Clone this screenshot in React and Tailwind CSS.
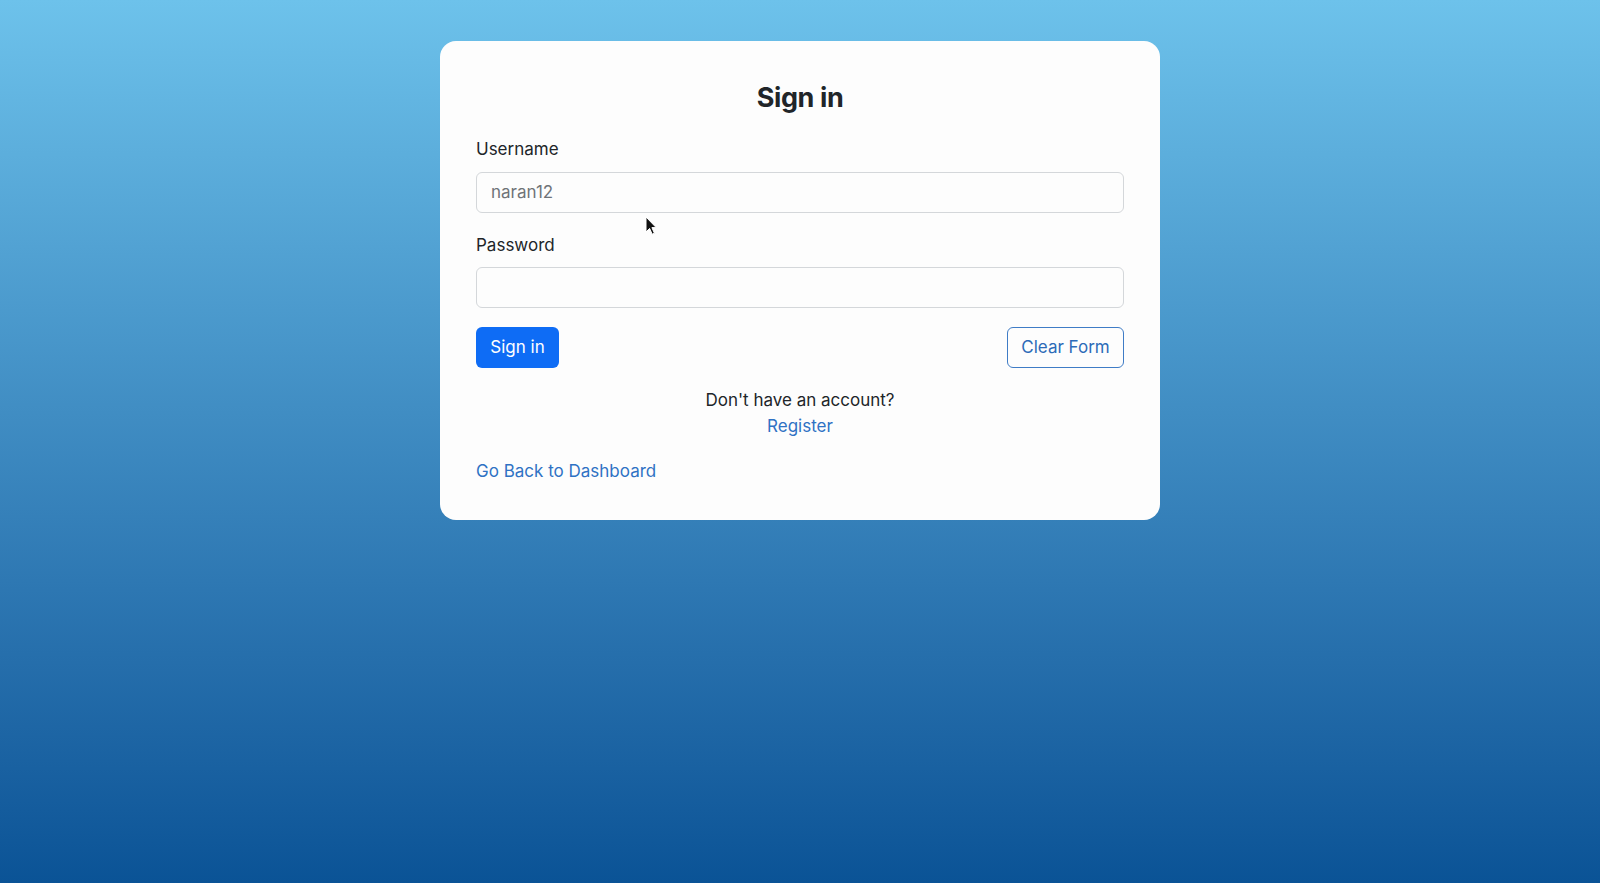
import React from "react";

export default function App() {
  return (
    <div
      className="relative w-full h-[883px] overflow-hidden bg-linear-to-b from-[#6dc2eb] to-[#0a5396]"
      style={{ fontFamily: "Inter, 'Noto Sans', 'Liberation Sans', sans-serif" }}
    >
      <div className="mx-auto mt-[41px] w-[720px] rounded-2xl bg-[#fdfdfd] px-9 pt-[41px] pb-[36px] text-[#212529]">
        <h1 className="text-center text-[27px] font-bold leading-[32px] tracking-[-0.4px]">Sign in</h1>

        <label className="mt-[22px] block text-[17px] leading-[26px]">Username</label>
        <div className="mt-[10px] flex h-[41px] items-center rounded-md border border-[#d4d7da] bg-[#fdfdfd] px-[14px] text-[17px] text-[#6f7378]">
          naran12
        </div>

        <label className="mt-[19px] block text-[17px] leading-[26px]">Password</label>
        <div className="mt-[9px] h-[41px] rounded-md border border-[#d4d7da] bg-[#fdfdfd]"></div>

        <div className="mt-[19px] flex items-center justify-between">
          <button className="flex h-[41px] w-[83px] items-center justify-center rounded-md bg-[#0e6cf5] text-[17px] text-white">
            Sign in
          </button>
          <button className="flex h-[41px] w-[117px] items-center justify-center rounded-md border border-[#3f7cc6] text-[17px] text-[#2c6bb8]">
            Clear Form
          </button>
        </div>

        <div className="mt-[19px] text-center text-[17px] leading-[26px]">
          <p>Don't have an account?</p>
          <p className="text-[#2f72c4]">Register</p>
        </div>

        <p className="mt-[19px] text-[17px] leading-[26px] text-[#2f72c4]">Go Back to Dashboard</p>
      </div>

      <svg
        className="absolute left-[645px] top-[216px]"
        width="12"
        height="20"
        viewBox="0 0 12 20"
      >
        <path
          d="M1 1 L1 16 L4.6 12.4 L7.2 18.2 L9.4 17.2 L6.9 11.6 L11.2 11.6 Z"
          fill="#111"
          stroke="#fff"
          strokeWidth="1"
          strokeLinejoin="round"
        />
      </svg>
    </div>
  );
}
